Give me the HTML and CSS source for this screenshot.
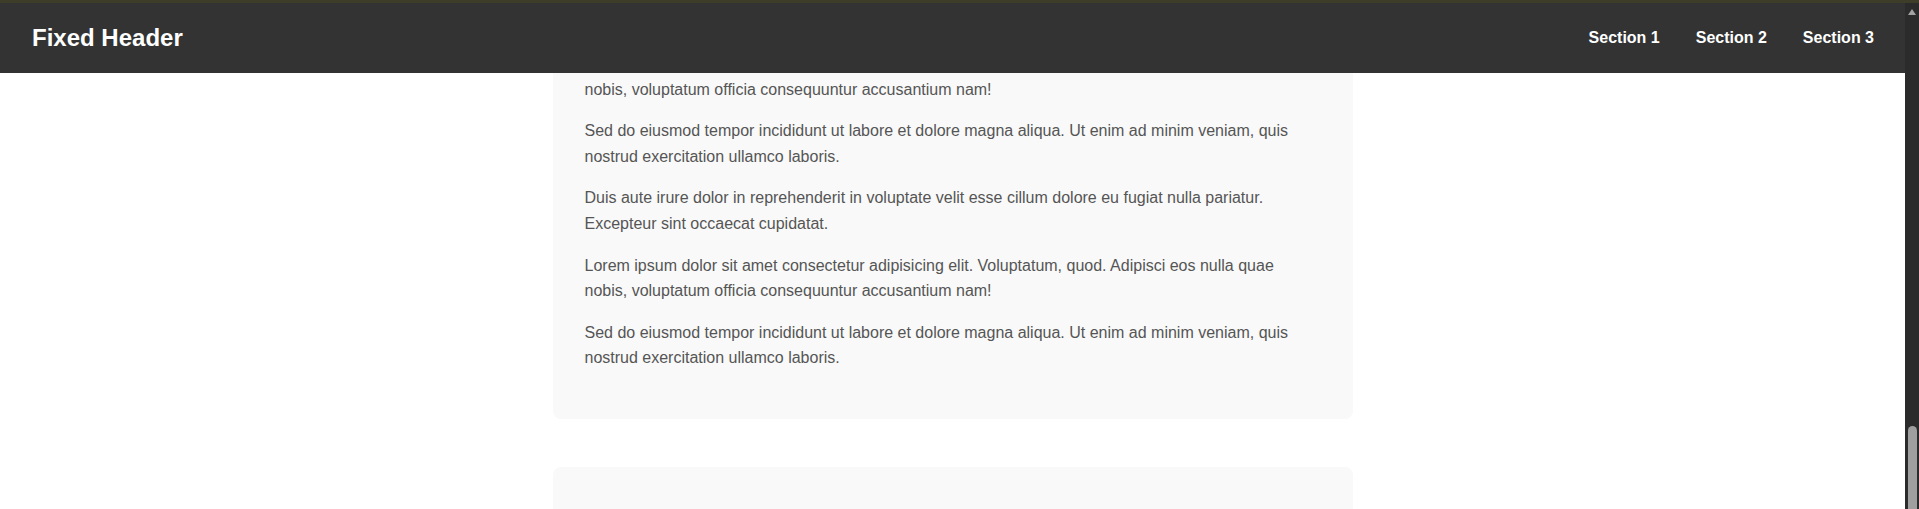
FILE: index.html
```html
<!DOCTYPE html>
<html lang="en">
<head>
<meta charset="utf-8">
<title>Fixed Header</title>
<link rel="stylesheet" href="styles.css">
</head>
<body>
<div class="chrome-strip"></div>
<div class="window">
  <div class="viewport">
    <header class="site-header">
      <h1 class="site-title">Fixed Header</h1>
      <nav class="site-nav">
        <a href="#s1" class="nav-link">Section 1</a>
        <a href="#s2" class="nav-link">Section 2</a>
        <a href="#s3" class="nav-link">Section 3</a>
      </nav>
    </header>
    <main class="content">
      <section class="card">
        <p>Lorem ipsum dolor sit amet consectetur adipisicing elit. Voluptatum, quod. Adipisci eos nulla quae nobis, voluptatum officia consequuntur accusantium nam!</p>
        <p>Sed do eiusmod tempor incididunt ut labore et dolore magna aliqua. Ut enim ad minim veniam, quis nostrud exercitation ullamco laboris.</p>
        <p>Duis aute irure dolor in reprehenderit in voluptate velit esse cillum dolore eu fugiat nulla pariatur. Excepteur sint occaecat cupidatat.</p>
        <p>Lorem ipsum dolor sit amet consectetur adipisicing elit. Voluptatum, quod. Adipisci eos nulla quae nobis, voluptatum officia consequuntur accusantium nam!</p>
        <p>Sed do eiusmod tempor incididunt ut labore et dolore magna aliqua. Ut enim ad minim veniam, quis nostrud exercitation ullamco laboris.</p>
      </section>
      <section class="card" id="s3">
        <p>&nbsp;</p>
      </section>
    </main>
  </div>
  <div class="scrollbar">
    <span class="scroll-arrow"></span>
    <span class="scroll-thumb"></span>
  </div>
</div>
</body>
</html>
```

FILE: styles.css
```css
* {
  box-sizing: border-box;
}

html, body {
  margin: 0;
  padding: 0;
  height: 509px;
  overflow: hidden;
  background: #ffffff;
  font-family: "Liberation Sans", Arial, sans-serif;
}

.chrome-strip {
  height: 3px;
  background: #3d3d29;
}

.window {
  display: flex;
  height: 506px;
}

.viewport {
  position: relative;
  flex: 1;
  overflow: hidden;
  background: #ffffff;
}

.site-header {
  position: absolute;
  top: 0;
  left: 0;
  right: 0;
  z-index: 10;
  height: 70px;
  display: flex;
  align-items: center;
  justify-content: space-between;
  padding: 0 31px 0 32px;
  background: #333333;
  color: #ffffff;
}

.site-title {
  margin: 0;
  font-size: 24px;
  font-weight: 700;
  line-height: 1;
}

.site-nav {
  display: flex;
  gap: 36px;
}

.nav-link {
  color: #ffffff;
  text-decoration: none;
  font-size: 16px;
  font-weight: 700;
  line-height: 1;
}

.content {
  display: flex;
  flex-direction: column;
  align-items: center;
  gap: 48px;
}

.card {
  width: 800px;
  padding: 32px;
  background: #f9f9f9;
  border-radius: 8px;
}

.card p {
  margin: 16px 0;
  font-size: 16px;
  line-height: 1.6;
  color: #555555;
}

.scrollbar {
  width: 14px;
  display: flex;
  flex-direction: column;
  align-items: center;
  justify-content: space-between;
  background: #2b2b2b;
  padding-top: 6px;
}

.scroll-arrow {
  width: 0;
  height: 0;
  border-left: 4.5px solid transparent;
  border-right: 4.5px solid transparent;
  border-bottom: 6px solid #a3a3a3;
}

.scroll-thumb {
  width: 9px;
  height: 83px;
  background: #9f9f9f;
  border-radius: 4.5px 4.5px 0 0;
}
```
